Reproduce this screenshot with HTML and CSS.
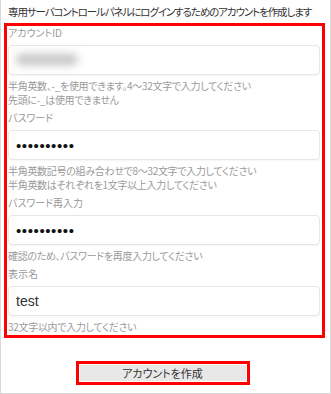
FILE: index.html
```html
<!DOCTYPE html>
<html lang="ja">
<head>
    <meta charset="UTF-8">
    <meta name="viewport" content="width=device-width, initial-scale=1.0">
    <title>アカウント作成</title>
    <link rel="stylesheet" href="styles.css">
</head>
<body>
    <div class="panel">
        <p class="lead">専用サーバコントロールパネルにログインするためのアカウントを作成します</p>

        <form class="account-form">
            <div class="field">
                <label class="field-label">アカウントID</label>
                <div class="field-input"><span class="masked"></span></div>
                <p class="hint">半角英数、-_を使用できます。4～32文字で入力してください<br>先頭に-_は使用できません</p>
            </div>
            <div class="field">
                <label class="field-label">パスワード</label>
                <input class="field-input password" type="password" value="xxxxxxxxxx" readonly>
                <p class="hint">半角英数記号の組み合わせで8～32文字で入力してください<br>半角英数はそれぞれを1文字以上入力してください</p>
            </div>
            <div class="field">
                <label class="field-label">パスワード再入力</label>
                <input class="field-input password" type="password" value="xxxxxxxxxx" readonly>
                <p class="hint">確認のため、パスワードを再度入力してください</p>
            </div>
            <div class="field">
                <label class="field-label">表示名</label>
                <input class="field-input text" type="text" value="test" readonly>
                <p class="hint">32文字以内で入力してください</p>
            </div>
        </form>

        <div class="actions">
            <div class="btn-frame">
                <button class="btn-submit" type="button">アカウントを作成</button>
            </div>
        </div>
    </div>
</body>
</html>
```

FILE: styles.css
```css
* {
    margin: 0;
    padding: 0;
    box-sizing: border-box;
}

body {
    font-family: 'Noto Sans CJK JP', 'Liberation Sans', sans-serif;
    font-feature-settings: "palt";
    background: #fff;
    color: #333;
}

.panel {
    width: 331px;
    height: 394px;
    border: 1px solid #d9d9d9;
    border-top: none;
    padding: 4px 5px 0 3px;
}

.lead {
    font-size: 10.5px;
    line-height: 16px;
    letter-spacing: -1.1px;
    white-space: nowrap;
    padding-left: 4px;
    color: #333;
}

/* 入力フォーム（赤枠） */
.account-form {
    margin-top: 3px;
    border: 3px solid #ff0000;
    padding: 0 2px 1px 1px;
}

.field-label {
    display: block;
    font-size: 10px;
    line-height: 14px;
    color: #999;
    margin-bottom: 5px;
}

.field-input {
    display: block;
    width: 100%;
    height: 30px;
    background: #fff;
    border: 1px solid #e6e6e6;
    border-radius: 4px;
    box-shadow: 0 1px 2px rgba(0, 0, 0, 0.04);
    padding: 0 7px;
    outline: none;
}

.masked {
    display: block;
    width: 62px;
    height: 11px;
    margin-top: 8px;
    background: #c4c4c4;
    border-radius: 6px;
    filter: blur(4px);
}

.password {
    font-family: 'Liberation Sans', sans-serif;
    font-size: 15px;
    letter-spacing: 0.6px;
    color: #111;
}

.text {
    font-family: 'Liberation Sans', sans-serif;
    font-size: 14px;
    color: #333;
}

.hint {
    font-size: 10px;
    line-height: 14px;
    letter-spacing: -0.3px;
    color: #9a9a9a;
    margin-top: 4px;
    margin-bottom: 4px;
}

.field:last-child .hint {
    margin-bottom: 0;
}

.actions {
    display: flex;
    justify-content: center;
    margin-top: 23px;
    padding-right: 4px;
}

.btn-frame {
    border: 3px solid #ff0000;
    width: 174px;
    padding: 1px;
}

.btn-submit {
    display: block;
    width: 100%;
    height: 16px;
    border: none;
    background: #e8e8e8;
    font-family: 'Noto Sans CJK JP', sans-serif;
    font-feature-settings: "palt";
    font-size: 11px;
    line-height: 16px;
    color: #333;
}
```
